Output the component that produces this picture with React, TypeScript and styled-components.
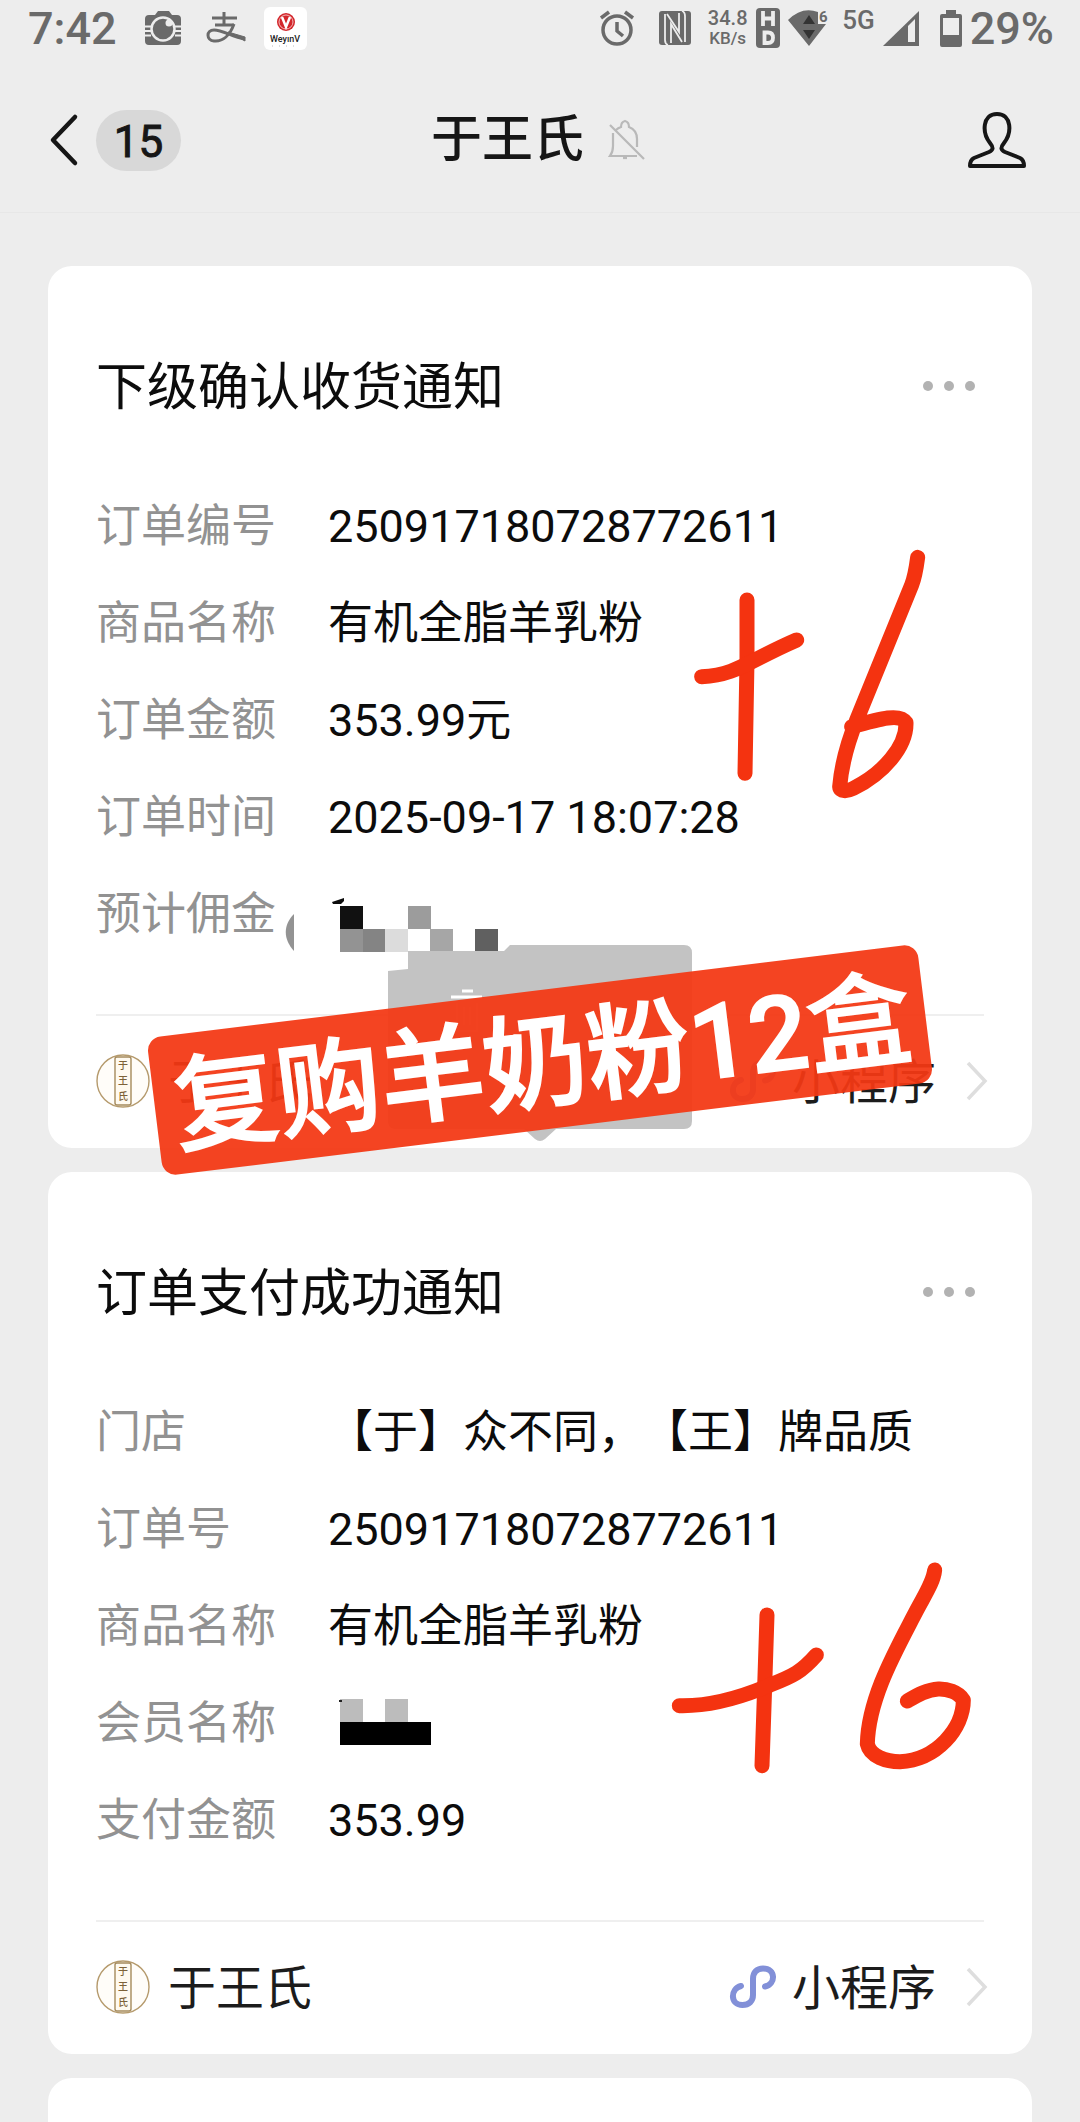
import React from 'react';
import styled, { createGlobalStyle } from 'styled-components';

const GlobalStyle = createGlobalStyle`
  * { box-sizing: border-box; }
  body {
    margin: 0;
    background: #ededed;
    color: #0c0c0c;
    font-family: Roboto, "Noto Sans CJK SC", sans-serif;
    -webkit-font-smoothing: antialiased;
    text-spacing-trim: space-all;
  }
  button { border: 0; padding: 0; background: none; color: inherit; font: inherit; cursor: pointer; }
  a { color: inherit; text-decoration: none; }
  svg { display: block; flex: none; overflow: visible; }
`;

const Screen = styled.div`
  height: 100vh;
  display: flex;
  flex-direction: column;
  overflow: hidden;
`;

const StatusBar = styled.div`
  flex: none;
  height: 56px;
  padding: 0 26px 0 28px;
  display: flex;
  align-items: center;
  justify-content: space-between;
  color: #6a6a6a;
  font-size: 45px;
  line-height: 56px;
`;

const StatusGroup = styled.div<{ $gap: number }>`
  display: flex;
  align-items: center;
  gap: ${(p) => p.$gap}px;
`;

const StatusText = styled.span`
  padding-top: 2px;
  font-weight: 500;
`;

const Speed = styled.div`
  width: 40px;
  display: flex;
  flex-direction: column;
  align-items: center;
  font-size: 20px;
  line-height: 20px;
  font-weight: 500;
  small { font-size: 17px; }
`;

const NetworkType = styled.span`
  width: 37px;
  height: 40px;
  font-size: 26px;
  line-height: 24px;
  font-weight: 500;
  text-align: right;
`;

const NavBar = styled.header`
  flex: none;
  height: 157px;
  padding: 12px 54px 0 50px;
  border-bottom: 1px solid #e7e7e7;
  display: grid;
  grid-template-columns: 1fr auto 1fr;
  align-items: center;
`;

const BackButton = styled.button`
  justify-self: start;
  display: flex;
  align-items: center;
  gap: 18px;
`;

const UnreadPill = styled.span`
  min-width: 85px;
  height: 61px;
  border-radius: 31px;
  background: #d8d8d8;
  color: #161616;
  font-size: 44px;
  line-height: 64px;
  text-align: center;
  -webkit-text-stroke: 1px;
`;

const NavTitle = styled.h1`
  margin: 0;
  display: flex;
  align-items: center;
  gap: 25px;
  color: #161616;
  font-size: 51px;
  line-height: 72px;
  font-weight: 500;
`;

const ProfileButton = styled.button`
  justify-self: end;
`;

const Feed = styled.main`
  flex: 1;
  min-height: 0;
  padding: 53px 48px 0;
  display: flex;
  flex-direction: column;
  gap: 24px;
`;

const CardBox = styled.article<{ $raised?: boolean }>`
  position: relative;
  z-index: ${(p) => (p.$raised ? 1 : 0)};
  flex: none;
  padding: 82px 48px 0;
  border-radius: 24px;
  background: #fff;
`;

const NextCard = styled.div`
  flex: 1 0 44px;
  border-radius: 24px 24px 0 0;
  background: #fff;
`;

const CardHeader = styled.div`
  display: flex;
  align-items: center;
  justify-content: space-between;
`;

const CardTitle = styled.h2`
  margin: 0;
  padding-top: 4px;
  font-size: 51px;
  line-height: 72px;
  font-weight: 400;
`;

const MoreButton = styled.button`
  display: flex;
  gap: 11px;
  padding: 24px 9px;
  span { width: 10px; height: 10px; border-radius: 50%; background: #b2b2b2; }
`;

const Details = styled.dl`
  margin: 54px 0 51px;
  display: grid;
  grid-template-columns: 232px 1fr;
  font-size: 45px;
  line-height: 97px;
  dt { color: #929292; }
  dd { margin: 0; height: 97px; white-space: nowrap; }
`;

const CardFooter = styled.a`
  height: 134px;
  margin-right: -4px;
  display: flex;
  align-items: center;
  justify-content: space-between;
  color: #1c1c1c;
  font-size: 48px;
  line-height: 72px;
`;

const Rule = styled.hr`
  margin: 0 0 -2px;
  border: 0;
  height: 2px;
  background: #efefef;
`;

const FooterPart = styled.span<{ $gap: number }>`
  display: flex;
  align-items: center;
  gap: ${(p) => p.$gap}px;
`;

const FooterLabel = styled.span<{ $space?: number }>`
  padding-top: 4px;
  margin-right: ${(p) => p.$space ?? 0}px;
`;

const Floating = styled.div<{ $left: number; $top: number }>`
  position: absolute;
  left: ${(p) => p.$left}px;
  top: ${(p) => p.$top}px;
  pointer-events: none;
`;

const Banner = styled.div`
  position: absolute;
  z-index: 2;
  left: 50%;
  top: 794px;
  width: 776px;
  height: 139px;
  padding: 8px 14px 0 18px;
  border-radius: 14px;
  background: rgba(243, 56, 20, 0.94);
  color: #fff;
  font-size: 104px;
  line-height: 132px;
  font-weight: 500;
  -webkit-text-stroke: 2px #fff;
  white-space: nowrap;
  display: flex;
  align-items: center;
  justify-content: center;
  transform: translate(-50%, -50%) rotate(-7deg);
`;

const CameraIcon = () => (
  <svg width="53" height="34" viewBox="-10 0 53 34">
    <path fill="currentColor" d="M4 4h6l3-4h11l3 4h5q4 0 4 4v22q0 4-4 4H4q-4 0-4-4V8q0-4 4-4z" />
    <path d="M0 15.500h6M0 20h6M0 24.500h6M30 15.500h6M30 20h6M30 24.500h6" stroke="#ededed" strokeWidth="2" />
    <circle cx="18" cy="18" r="11.500" fill="currentColor" stroke="#ededed" strokeWidth="2.500" />
    <circle cx="24" cy="12" r="3.500" fill="#ededed" />
  </svg>
);

const AlipayIcon = () => (
  <svg width="40" height="32" viewBox="0 0 40 32" fill="none" stroke="currentColor" strokeWidth="3">
    <path d="M6 6h25M18 0v13M9 13h19" />
    <path d="M28 12C24 23 17 30 8 29 0 28 0 18 8 18c9 0 18 7 31 9" />
    <path d="M22 20l17 5v4z" fill="currentColor" strokeWidth="1" />
  </svg>
);

const AppIcon = () => (
  <svg width="43" height="43" viewBox="0 0 43 43">
    <rect width="43" height="43" rx="6" fill="#fff" />
    <circle cx="22" cy="15" r="9" fill="#d3262b" />
    <circle cx="22" cy="15" r="7" fill="none" stroke="#f3b9ba" strokeWidth="1" />
    <path d="M18 10l4 10 4-10" fill="none" stroke="#fff" strokeWidth="2.500" />
    <text x="21" y="35" textAnchor="middle" fontSize="9" fontWeight="500" fill="#222">WeyınV</text>
    <path d="M8 39h28" stroke="#bbb" strokeDasharray="1 6" />
  </svg>
);

const AlarmIcon = () => (
  <svg width="45" height="36" viewBox="0 0 45 36" fill="none" stroke="currentColor" strokeWidth="3.500">
    <circle cx="19" cy="20" r="14" />
    <path d="M19 12v9l6 5M3 8l8-6M35 8l-8-6" />
  </svg>
);

const NfcIcon = () => (
  <svg width="49" height="34" viewBox="0 0 49 34">
    <rect x="8" y="0" width="32" height="34" rx="3" fill="currentColor" />
    <path d="M17 34q-3-1-3-5V3M31 0q3 1 3 5v26" fill="none" stroke="#ededed" strokeWidth="1.800" />
    <path d="M20 32V13L31 31M28 2v19L16 3" fill="none" stroke="#ededed" strokeWidth="1.800" />
  </svg>
);

const HdIcon = () => (
  <svg width="24" height="40" viewBox="0 0 24 40">
    <rect width="24" height="40" rx="4" fill="currentColor" />
    <path d="M7 3v15M17 3v15M7 10.500h10M8.500 24.500v10.500h3.500q5 0 5-5.200T12 24.500z" fill="none" stroke="#ededed" strokeWidth="3.800" />
  </svg>
);

const WifiIcon = () => (
  <svg width="42" height="36" viewBox="0 0 42 36">
    <path fill="currentColor" d="M0 10Q14-4 30 2v12h8L21 36z" />
    <path fill="#333" d="M21 5l6 9H15zM15 20h12l-6 9z" />
    <text x="31" y="12" fontSize="15" fontWeight="700" fill="currentColor">6</text>
  </svg>
);

const SignalIcon = () => (
  <svg width="49" height="36" viewBox="0 0 49 36">
    <path fill="currentColor" d="M0 36L36 1v35z" />
    <path fill="#ededed" d="M25 16l7-7v23h-7z" />
  </svg>
);

const BatteryIcon = () => (
  <svg width="22" height="37" viewBox="0 0 22 37">
    <path fill="currentColor" d="M6 0h10v4h4q2 0 2 2v29q0 2-2 2H2q-2 0-2-2V6q0-2 2-2h4z" />
    <rect x="3" y="8" width="16" height="17" fill="#ededed" />
  </svg>
);

const BackIcon = () => (
  <svg width="28" height="52" viewBox="0 0 28 52">
    <path d="M25 3L3 26l22 23" fill="none" stroke="#161616" strokeWidth="4.500" strokeLinecap="round" strokeLinejoin="round" />
  </svg>
);

const MutedIcon = () => (
  <svg width="36" height="40" viewBox="0 0 36 40" fill="none" stroke="#b9b9b9" strokeWidth="2.200">
    <path d="M1 5l34 34M4 13v13q0 6-3 10h27M7 10q2-2 5-3 0-5 4-6 4 1 4 6 8 3 8 12v8" />
    <path d="M14 38h4" />
  </svg>
);

const PersonIcon = () => (
  <svg width="58" height="56" viewBox="0 0 58 56" fill="none" stroke="#161616" strokeWidth="4" strokeLinejoin="round">
    <path d="M29 2C14 2 14 21 22 31 26 36 25 38 21 40L6 46Q2 48 2 54H56Q56 48 52 46L37 40C33 38 32 36 36 31 44 21 44 2 29 2z" />
  </svg>
);

const AvatarIcon = () => (
  <svg width="54" height="54" viewBox="0 0 54 54">
    <circle cx="27" cy="27" r="26" fill="#fffdf9" stroke="#b59a6c" strokeWidth="1.400" />
    <rect x="19" y="3" width="16" height="48" rx="2" fill="#fffaf0" stroke="#a58a5c" strokeWidth="1.400" />
    <g fill="#7d6238" fontSize="10" fontWeight="500" textAnchor="middle">
      <text x="27" y="15">于</text>
      <text x="27" y="30">王</text>
      <text x="27" y="46">氏</text>
    </g>
  </svg>
);

const MiniProgramIcon = () => (
  <svg width="46" height="44" viewBox="0 0 46 44">
    <path
      d="M11 21C0 24 0 40 12.500 40 19 40 23 36 23 30V14C23 7 27 3.500 33 3.500 46 3.500 46 19 35 21.500"
      fill="none" stroke="#8290d8" strokeWidth="6" strokeLinecap="round"
    />
  </svg>
);

const ChevronIcon = () => (
  <svg width="22" height="40" viewBox="0 0 22 40">
    <path d="M2 2l17 18L2 38" fill="none" stroke="#dedede" strokeWidth="3.500" />
  </svg>
);

const CommissionMosaic = () => (
  <svg width="180" height="97" viewBox="0 2 180 97">
    <path d="M-34 87c-11-12-11-26 0-37z" fill="#939393" />
    <path d="M4 38l12-4v3l-3 3H5z" fill="#0c0c0c" />
    <g shapeRendering="crispEdges">
      <rect x="12" y="42" width="23" height="23" fill="#111" />
      <rect x="80" y="42" width="23" height="23" fill="#9c9c9c" />
      <rect x="12" y="65" width="23" height="23" fill="#939393" />
      <rect x="35" y="65" width="22" height="23" fill="#848484" />
      <rect x="57" y="65" width="23" height="23" fill="#dcdcdc" />
      <rect x="102" y="65" width="23" height="23" fill="#a6a6a6" />
      <rect x="147" y="65" width="23" height="23" fill="#606060" />
    </g>
  </svg>
);

const MemberMosaic = () => (
  <svg width="120" height="97" viewBox="0 2 120 97" shapeRendering="crispEdges">
    <rect x="12" y="26" width="23" height="23" fill="#bcbcbc" />
    <rect x="57" y="26" width="23" height="23" fill="#bcbcbc" />
    <rect x="12" y="49" width="91" height="23" fill="#000" />
    <rect x="11" y="27" width="3" height="2" fill="#222" />
  </svg>
);

const PopupRemnant = () => (
  <svg width="304" height="196" viewBox="0 0 304 196">
    <path
      fill="#c3c3c3"
      d="M0 26l20-2V6h96l6-6h174q8 0 8 8v168q0 8-8 8H168l-11 10q-5 4-10 0l-11-10H8q-8 0-8-8z"
    />
    <path d="M63 52h31M74 46h11" fill="none" stroke="#fff" strokeWidth="3" />
    <path d="M69 58v28h20V58M76 62v18M82 62v18" fill="none" stroke="#ddd" strokeWidth="2" />
  </svg>
);

const PlusSixA = () => (
  <svg width="320" height="300" viewBox="0 0 960 900" fill="none" stroke="#f43310" strokeWidth="45" strokeLinecap="round" strokeLinejoin="round">
    <path d="M261 240V420L255 760" />
    <path d="M125 470C230 465 260 425 410 360" />
    <path d="M773 112C768 150 765 170 755 195L590 600C560 675 545 730 539 800 540 815 560 815 580 805 670 760 740 680 738 608 720 580 665 595 575 620" />
  </svg>
);

const PlusSixB = () => (
  <svg width="380" height="250" viewBox="0 0 1140 750" fill="none" stroke="#f43310" strokeWidth="45" strokeLinecap="round" strokeLinejoin="round">
    <path d="M381 225L374 440L366 677" />
    <path d="M118 497C240 500 350 452 390 435 460 408 485 395 529 345" />
    <path d="M884 90C880 130 850 170 820 230 760 345 685 480 682 612 690 650 740 665 780 665 890 660 970 565 970 480 955 455 920 446 895 447 860 449 830 467 802 483" />
  </svg>
);

type Row = { label: string; value: React.ReactNode };

const receiptRows: Row[] = [
  { label: '订单编号', value: '250917180728772611' },
  { label: '商品名称', value: '有机全脂羊乳粉' },
  { label: '订单金额', value: '353.99元' },
  { label: '订单时间', value: '2025-09-17 18:07:28' },
  { label: '预计佣金', value: <CommissionMosaic /> },
];

const paymentRows: Row[] = [
  { label: '门店', value: '【于】众不同，【王】牌品质' },
  { label: '订单号', value: '250917180728772611' },
  { label: '商品名称', value: '有机全脂羊乳粉' },
  { label: '会员名称', value: <MemberMosaic /> },
  { label: '支付金额', value: '353.99' },
];

type CardProps = { title: string; rows: Row[]; raised?: boolean; children?: React.ReactNode };

const NoticeCard = ({ title, rows, raised, children }: CardProps) => (
  <CardBox $raised={raised}>
    <CardHeader>
      <CardTitle>{title}</CardTitle>
      <MoreButton type="button" aria-label="更多"><span /><span /><span /></MoreButton>
    </CardHeader>
    <Details>
      {rows.map((row) => (
        <React.Fragment key={row.label}>
          <dt>{row.label}</dt>
          <dd>{row.value}</dd>
        </React.Fragment>
      ))}
    </Details>
    <Rule />
    <CardFooter href="#">
      <FooterPart $gap={18}>
        <AvatarIcon />
        <FooterLabel>于王氏</FooterLabel>
      </FooterPart>
      <FooterPart $gap={16}>
        <MiniProgramIcon />
        <FooterLabel $space={14}>小程序</FooterLabel>
        <ChevronIcon />
      </FooterPart>
    </CardFooter>
    {children}
  </CardBox>
);

export default function App() {
  return (
    <Screen>
      <GlobalStyle />
      <StatusBar>
        <StatusGroup $gap={18}>
          <StatusText>7:42</StatusText>
          <CameraIcon />
          <AlipayIcon />
          <AppIcon />
        </StatusGroup>
        <StatusGroup $gap={8}>
          <AlarmIcon />
          <NfcIcon />
          <Speed>34.8<small>KB/s</small></Speed>
          <HdIcon />
          <WifiIcon />
          <NetworkType>5G</NetworkType>
          <SignalIcon />
          <BatteryIcon />
          <StatusText>29%</StatusText>
        </StatusGroup>
      </StatusBar>
      <NavBar>
        <BackButton type="button" aria-label="返回"><BackIcon /><UnreadPill>15</UnreadPill></BackButton>
        <NavTitle>于王氏<MutedIcon /></NavTitle>
        <ProfileButton type="button" aria-label="资料"><PersonIcon /></ProfileButton>
      </NavBar>
      <Feed>
        <NoticeCard title="下级确认收货通知" rows={receiptRows} raised>
          <Floating $left={340} $top={679}><PopupRemnant /></Floating>
          <Floating $left={612} $top={254}><PlusSixA /></Floating>
          <Banner>复购羊奶粉12盒</Banner>
        </NoticeCard>
        <NoticeCard title="订单支付成功通知" rows={paymentRows}>
          <Floating $left={592} $top={368}><PlusSixB /></Floating>
        </NoticeCard>
        <NextCard />
      </Feed>
    </Screen>
  );
}
